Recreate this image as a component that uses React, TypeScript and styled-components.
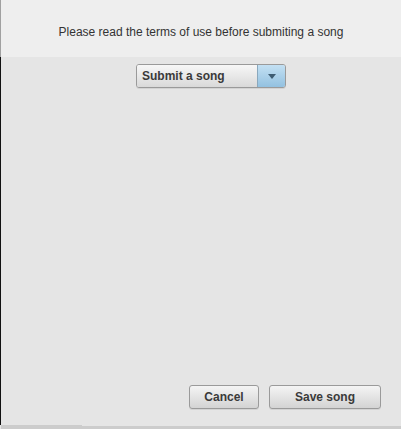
import React from "react";
import styled, { createGlobalStyle } from "styled-components";

const Global = createGlobalStyle`
  html, body { margin: 0; padding: 0; }
  body { font-family: "Liberation Sans", Arial, sans-serif; background: #e5e5e5; }
`;

const Page = styled.div`
  width: 401px;
  height: 429px;
  display: flex;
  flex-direction: column;
  overflow: hidden;
`;

const Header = styled.div`
  height: 57px;
  box-sizing: border-box;
  padding-top: 25px;
  background: #eeeeee;
  border-left: 1px solid #a0a0a0;
  text-align: center;
  font-size: 12px;
  line-height: 15px;
  color: #333;
`;

const Body = styled.div`
  flex: 1;
  display: flex;
  flex-direction: column;
  align-items: center;
  background: #e5e5e5;
  border-left: 1px solid #111;
  padding-top: 7px;
  padding-bottom: 16px;
`;

const Select = styled.div`
  width: 150px;
  height: 24px;
  margin-left: 20px;
  box-sizing: border-box;
  display: flex;
  border: 1px solid #9a9a9a;
  border-radius: 3px;
  overflow: hidden;
  box-shadow: 0 1px 0 rgba(0,0,0,0.08);
`;

const SelectLabel = styled.div`
  flex: 1;
  display: flex;
  align-items: center;
  padding-left: 5px;
  font-size: 12px;
  font-weight: bold;
  color: #3a3a3a;
  background: linear-gradient(#f7f7f7, #d9d9d9);
  border-right: 1px solid #8aa8bd;
`;

const SelectArrow = styled.div`
  width: 27px;
  display: flex;
  align-items: center;
  justify-content: center;
  background: linear-gradient(#c3e0f3, #93c1e0);
`;

const Spacer = styled.div`
  flex: 1;
`;

const Actions = styled.div`
  align-self: stretch;
  display: flex;
  justify-content: flex-end;
  gap: 10px;
  padding-right: 20px;
`;

const Button = styled.button<{ $w: number }>`
  width: ${(p) => p.$w}px;
  height: 24px;
  box-sizing: border-box;
  border: 1px solid #9a9a9a;
  border-radius: 3px;
  background: linear-gradient(#f4f4f4, #d3d3d3);
  font-family: "Liberation Sans", Arial, sans-serif;
  font-size: 12px;
  font-weight: bold;
  color: #3a3a3a;
  padding: 0;
  box-shadow: 0 1px 0 rgba(0,0,0,0.08);
`;

const Footer = styled.div`
  height: 4px;
  display: flex;
  align-items: flex-end;
  padding-left: 1px;
  background: #e5e5e5;
`;

const FooterSeg = styled.div<{ $h: number; $w?: number }>`
  height: ${(p) => p.$h}px;
  ${(p) => (p.$w ? `width: ${p.$w}px;` : "flex: 1;")}
  background: #cccccc;
`;

export default function App() {
  return (
    <Page>
      <Global />
      <Header>Please read the terms of use before submiting a song</Header>
      <Body>
        <Select>
          <SelectLabel>Submit a song</SelectLabel>
          <SelectArrow>
            <svg width="8" height="5" viewBox="0 0 8 5">
              <path d="M0 0 H8 L4 5 Z" fill="#3d5c72" />
            </svg>
          </SelectArrow>
        </Select>
        <Spacer />
        <Actions>
          <Button $w={70}>Cancel</Button>
          <Button $w={112}>Save song</Button>
        </Actions>
      </Body>
      <Footer>
        <FooterSeg $h={4} $w={81} />
        <FooterSeg $h={3} />
      </Footer>
    </Page>
  );
}
